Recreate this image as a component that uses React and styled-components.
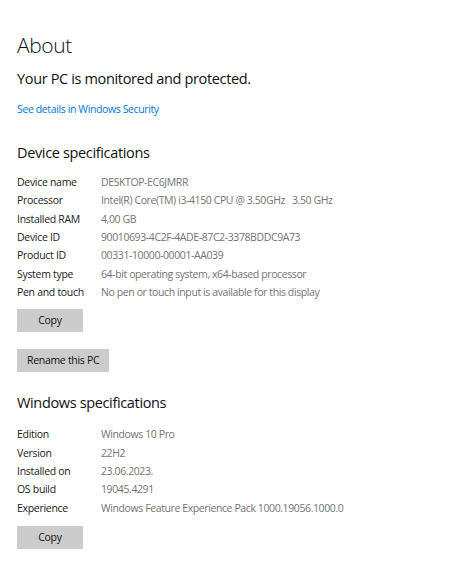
import React from "react";
import styled, { createGlobalStyle } from "styled-components";

const Global = createGlobalStyle`
  html, body { margin: 0; padding: 0; background: #ffffff; }
  body { font-family: "Segoe UI", "Open Sans", "Noto Sans", sans-serif; color: #000; }
`;

const Page = styled.div`
  display: flex;
  flex-direction: column;
  align-items: flex-start;
  padding: 31px 17px 0 17px;
  width: 450px;
  box-sizing: border-box;
`;

const Title = styled.h1`
  margin: 0;
  font-size: 21px;
  font-weight: 300;
  letter-spacing: -0.4px;
  line-height: 28px;
  color: #111;
`;

const Subtitle = styled.div`
  margin-top: 9.5px;
  font-size: 14.5px;
  letter-spacing: -0.35px;
  line-height: 20px;
  color: #111;
`;

const Link = styled.a`
  margin-top: 12.5px;
  font-size: 10.5px;
  letter-spacing: -0.38px;
  line-height: 16px;
  color: #0078d7;
  text-decoration: none;
`;

const SectionTitle = styled.h2`
  margin: ${(p) => p.$top}px 0 0 0;
  font-size: 14.5px;
  font-weight: 400;
  letter-spacing: -0.35px;
  line-height: 20px;
  color: #111;
`;

const SpecList = styled.dl`
  margin: ${(p) => p.$top}px 0 0 0;
  display: grid;
  grid-template-columns: 84px auto;
  grid-auto-rows: 18.3px;
  font-size: 10.5px;
  letter-spacing: -0.3px;
  line-height: 18.3px;
  white-space: pre;
`;

const Label = styled.dt`
  margin: 0;
  color: #1a1a1a;
`;

const Value = styled.dd`
  margin: 0;
  color: #737373;
  letter-spacing: -0.4px;
`;

const Button = styled.button`
  margin-top: ${(p) => p.$top}px;
  height: 23px;
  min-width: 66px;
  padding: 0 10px;
  border: none;
  background: #cccccc;
  font-family: inherit;
  font-size: 10.5px;
  letter-spacing: -0.3px;
  color: #111;
  line-height: 23px;
`;

const device = [
  ["Device name", "DESKTOP-EC6JMRR"],
  ["Processor", "Intel(R) Core(TM) i3-4150 CPU @ 3.50GHz   3.50 GHz"],
  ["Installed RAM", "4,00 GB"],
  ["Device ID", "90010693-4C2F-4ADE-87C2-3378BDDC9A73"],
  ["Product ID", "00331-10000-00001-AA039"],
  ["System type", "64-bit operating system, x64-based processor"],
  ["Pen and touch", "No pen or touch input is available for this display"],
];

const windows = [
  ["Edition", "Windows 10 Pro"],
  ["Version", "22H2"],
  ["Installed on", "23.06.2023."],
  ["OS build", "19045.4291"],
  ["Experience", "Windows Feature Experience Pack 1000.19056.1000.0"],
];

function Specs({ items, top }) {
  return (
    <SpecList $top={top}>
      {items.map(([k, v]) => (
        <React.Fragment key={k}>
          <Label>{k}</Label>
          <Value>{v}</Value>
        </React.Fragment>
      ))}
    </SpecList>
  );
}

export default function App() {
  return (
    <>
      <Global />
      <Page>
        <Title>About</Title>
        <Subtitle>Your PC is monitored and protected.</Subtitle>
        <Link href="#">See details in Windows Security</Link>
        <SectionTitle $top={25.5}>Device specifications</SectionTitle>
        <Specs items={device} top={10.65} />
        <Button $top={7.75}>Copy</Button>
        <Button $top={17}>Rename this PC</Button>
        <SectionTitle $top={21.5}>Windows specifications</SectionTitle>
        <Specs items={windows} top={11.85} />
        <Button $top={9.15}>Copy</Button>
      </Page>
    </>
  );
}
